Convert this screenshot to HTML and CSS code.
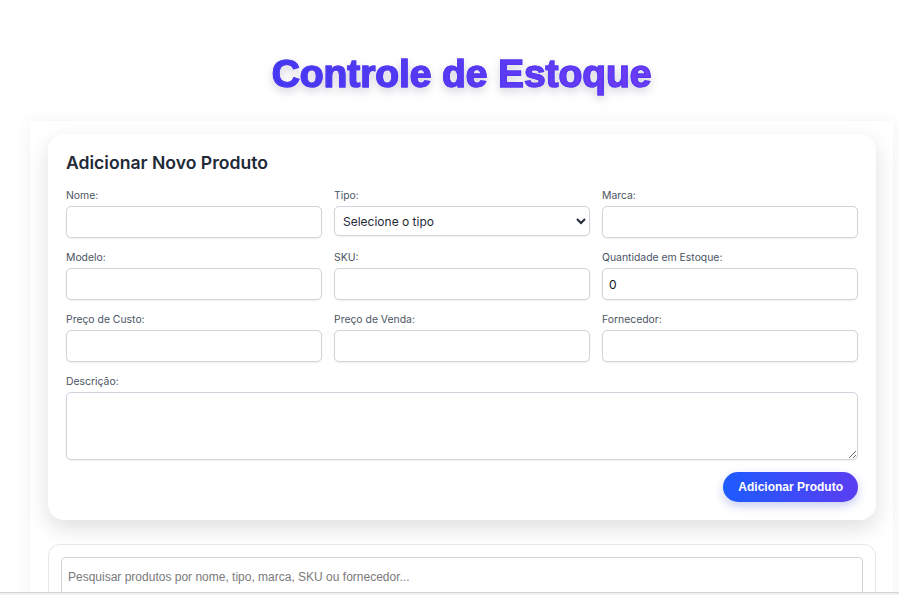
FILE: index.html
```html
<!DOCTYPE html>
<html lang="pt-BR">
<head>
<meta charset="utf-8">
<title>Controle de Estoque</title>
<link rel="stylesheet" href="styles.css">
</head>
<body>
<div class="page">
  <header class="header">
    <h1 class="title"><span class="title-text">Controle de Estoque</span></h1>
  </header>
  <main class="container">
    <section class="card form-card">
      <h2 class="card-title">Adicionar Novo Produto</h2>
      <form class="form-grid">
        <div class="field">
          <label class="label">Nome:</label>
          <input class="input" type="text">
        </div>
        <div class="field">
          <label class="label">Tipo:</label>
          <select class="input select">
            <option>Selecione o tipo</option>
          </select>
        </div>
        <div class="field">
          <label class="label">Marca:</label>
          <input class="input" type="text">
        </div>
        <div class="field">
          <label class="label">Modelo:</label>
          <input class="input" type="text">
        </div>
        <div class="field">
          <label class="label">SKU:</label>
          <input class="input" type="text">
        </div>
        <div class="field">
          <label class="label">Quantidade em Estoque:</label>
          <input class="input" type="number" value="0">
        </div>
        <div class="field">
          <label class="label">Preço de Custo:</label>
          <input class="input" type="text">
        </div>
        <div class="field">
          <label class="label">Preço de Venda:</label>
          <input class="input" type="text">
        </div>
        <div class="field">
          <label class="label">Fornecedor:</label>
          <input class="input" type="text">
        </div>
        <div class="field field-full">
          <label class="label">Descrição:</label>
          <textarea class="input textarea"></textarea>
        </div>
      </form>
      <div class="actions">
        <button class="btn" type="button">Adicionar Produto</button>
      </div>
    </section>
    <section class="card search-card">
      <input class="search" type="text" placeholder="Pesquisar produtos por nome, tipo, marca, SKU ou fornecedor...">
    </section>
  </main>
</div>
<div class="bottom-bar"></div>
</body>
</html>
```
FILE: styles.css
```css
* { box-sizing: border-box; }
html, body { margin: 0; padding: 0; }
body {
  background: #ffffff;
  font-family: "Inter", "Liberation Sans", sans-serif;
  color: #1f2937;
  overflow: hidden;
}
.page {
  margin-left: 30px;
  width: 863px;
}
.header {
  padding-top: 51px;
  height: 121px;
  text-align: center;
}
.title {
  margin: 0;
  font-family: "Liberation Sans", Arial, sans-serif;
  font-weight: 900;
  font-size: 39px;
  line-height: 46px;
  letter-spacing: -0.1px;
}
.title-text {
  display: inline-block;
  background: linear-gradient(90deg, #4338f0 0%, #6e3bf6 100%);
  -webkit-background-clip: text;
  background-clip: text;
  -webkit-text-fill-color: transparent;
  color: transparent;
  -webkit-text-stroke: 1.2px #5239f2;
  filter: drop-shadow(0 4px 4px rgba(40, 40, 80, 0.2));
}
.container {
  background: #ffffff;
  padding: 13px 17px 20px 18px;
  box-shadow: 0 0 16px rgba(0, 0, 0, 0.06);
  min-height: 600px;
}
.card {
  background: #ffffff;
  border-radius: 16px;
}
.form-card {
  padding: 18px;
  box-shadow: 0 8px 22px rgba(0, 0, 0, 0.13);
}
.card-title {
  margin: 0 0 15px 0;
  font-size: 17.6px;
  font-weight: 600;
  line-height: 22px;
  color: #1f2937;
}
.form-grid {
  display: grid;
  grid-template-columns: repeat(3, 1fr);
  column-gap: 12px;
  row-gap: 13px;
}
.field-full { grid-column: 1 / -1; }
.label {
  display: block;
  font-size: 10.4px;
  line-height: 14px;
  color: #4b5563;
  margin-bottom: 3px;
}
.input {
  display: block;
  width: 100%;
  height: 32px;
  border: 1px solid #cfd4dc;
  border-radius: 5px;
  background: #ffffff;
  padding: 0 6px;
  font-family: "Inter", "Liberation Sans", sans-serif;
  font-size: 12px;
  color: #111827;
  box-shadow: 0 1px 2px rgba(0, 0, 0, 0.06);
  margin: 0;
}
.select {
  height: 30px;
  padding: 0 4px;
  color: #1f2937;
}
.textarea {
  height: 68px;
  resize: vertical;
}
.actions {
  display: flex;
  justify-content: flex-end;
  margin-top: 12px;
}
.btn {
  height: 30px;
  padding: 0 15px;
  border: none;
  border-radius: 15px;
  background: linear-gradient(90deg, #1d5bff 0%, #5a3ef2 100%);
  color: #ffffff;
  font-family: "Liberation Sans", Arial, sans-serif;
  font-weight: 700;
  font-size: 12px;
  box-shadow: 0 4px 10px rgba(40, 60, 200, 0.25);
}
.search-card {
  margin-top: 24px;
  border: 1px solid #e5e7eb;
  border-radius: 12px;
  padding: 12px;
  height: 120px;
}
.search {
  display: block;
  width: 100%;
  height: 40px;
  border: 1px solid #d1d5db;
  border-radius: 4px;
  padding: 0 6px;
  font-family: "Liberation Sans", Arial, sans-serif;
  font-size: 12px;
  color: #111827;
}
.search::placeholder { color: #7a7a7a; }
.bottom-bar {
  position: fixed;
  left: 0;
  right: 0;
  bottom: 0;
  height: 3px;
  background: #f0f0f0;
  border-top: 1px solid #d4d4d4;
}
```
